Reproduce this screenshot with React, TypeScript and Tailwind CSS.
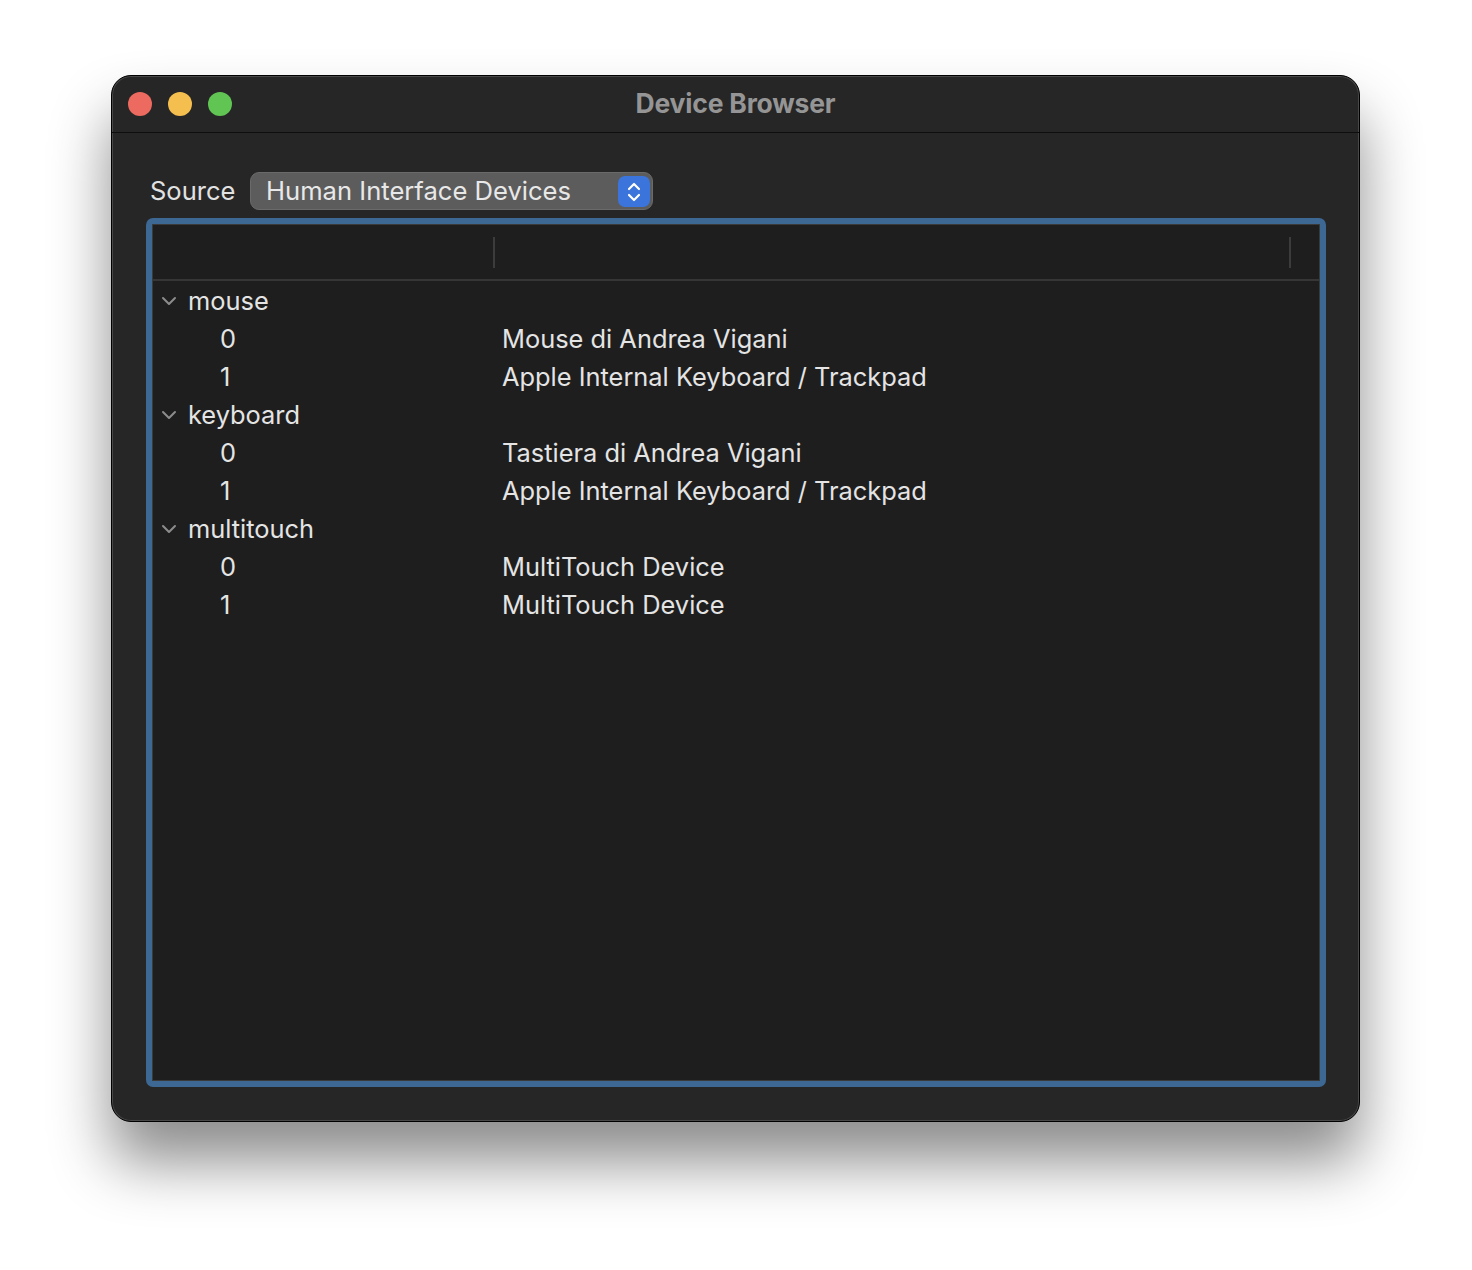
import React from "react";

const font = { fontFamily: "Inter, 'Noto Sans', sans-serif" };

function Chevron() {
  return (
    <svg width="16" height="10" viewBox="0 0 16 10" className="shrink-0">
      <path d="M2 2 L8 8 L14 2" fill="none" stroke="#8c8c8c" strokeWidth="2" strokeLinecap="round" strokeLinejoin="round" />
    </svg>
  );
}

const groups = [
  { name: "mouse", items: ["Mouse di Andrea Vigani", "Apple Internal Keyboard / Trackpad"] },
  { name: "keyboard", items: ["Tastiera di Andrea Vigani", "Apple Internal Keyboard / Trackpad"] },
  { name: "multitouch", items: ["MultiTouch Device", "MultiTouch Device"] },
];

export default function App() {
  return (
    <div className="w-[1472px] h-[1270px] bg-white pt-[75px] pl-[111px]" style={font}>
      <div className="w-[1249px] h-[1047px] rounded-[20px] bg-[#262626] border border-black shadow-[inset_0_0_0_1px_rgba(255,255,255,0.16),0_40px_60px_rgba(0,0,0,0.45)] flex flex-col overflow-hidden">
        {/* title bar */}
        <div className="relative h-[57px] shrink-0 border-b border-[#0e0e0e] flex items-center">
          <div className="flex items-center gap-[16px] pl-[16px]">
            <div className="w-[24px] h-[24px] rounded-full bg-[#ec6a5f]" />
            <div className="w-[24px] h-[24px] rounded-full bg-[#f4bf4f]" />
            <div className="w-[24px] h-[24px] rounded-full bg-[#61c554]" />
          </div>
          <div className="absolute inset-0 flex items-center justify-center pb-[1px] text-[26.5px] font-bold text-[#959595] tracking-[-0.2px]">
            Device Browser
          </div>
        </div>
        {/* body */}
        <div className="flex flex-col pl-[34px] pr-[33px]">
          <div className="flex items-center mt-[39px] pl-[4px] h-[38px]">
            <span className="text-[25.5px] text-[#e2e2e2] w-[100px]">Source</span>
            <div className="relative w-[403px] h-[38px] rounded-[9px] bg-[#5c5c5c] border border-[#6a6a6a] flex items-center pl-[15px]">
              <span className="text-[25.6px] text-[#e8e8e8]">Human Interface Devices</span>
              <div className="absolute right-[2px] top-[3px] w-[32px] h-[31px] rounded-[7px] bg-[#3b74da] flex items-center justify-center">
                <svg width="16" height="22" viewBox="0 0 16 22">
                  <path d="M3 8 L8 3 L13 8 M3 14 L8 19 L13 14" fill="none" stroke="#ffffff" strokeWidth="2.2" strokeLinecap="round" strokeLinejoin="round" />
                </svg>
              </div>
            </div>
          </div>
          {/* table */}
          <div className="mt-[8px] w-[1180px] h-[869px] rounded-[7px] bg-[#3c6893] p-[6px]">
            <div className="w-full h-full bg-[#1e1e1e] border border-[#3a3a3a] flex flex-col">
              <div className="h-[56px] border-b-2 border-[#363636] relative shrink-0">
                <div className="absolute left-[340px] top-[12px] w-[2px] h-[31px] bg-[#3c3c3c]" />
                <div className="absolute left-[1136px] top-[12px] w-[2px] h-[31px] bg-[#3c3c3c]" />
              </div>
              <div className="flex flex-col pt-[1px] text-[25.4px] text-[#e4e4e4]">
                {groups.map((g) => (
                  <React.Fragment key={g.name}>
                    <div className="h-[38px] flex items-center pl-[8px]">
                      <Chevron />
                      <span className="ml-[11px]">{g.name}</span>
                    </div>
                    {g.items.map((it, i) => (
                      <div key={i} className="h-[38px] flex items-center">
                        <span className="w-[349px] pl-[67px]">{i}</span>
                        <span>{it}</span>
                      </div>
                    ))}
                  </React.Fragment>
                ))}
              </div>
            </div>
          </div>
        </div>
      </div>
    </div>
  );
}
